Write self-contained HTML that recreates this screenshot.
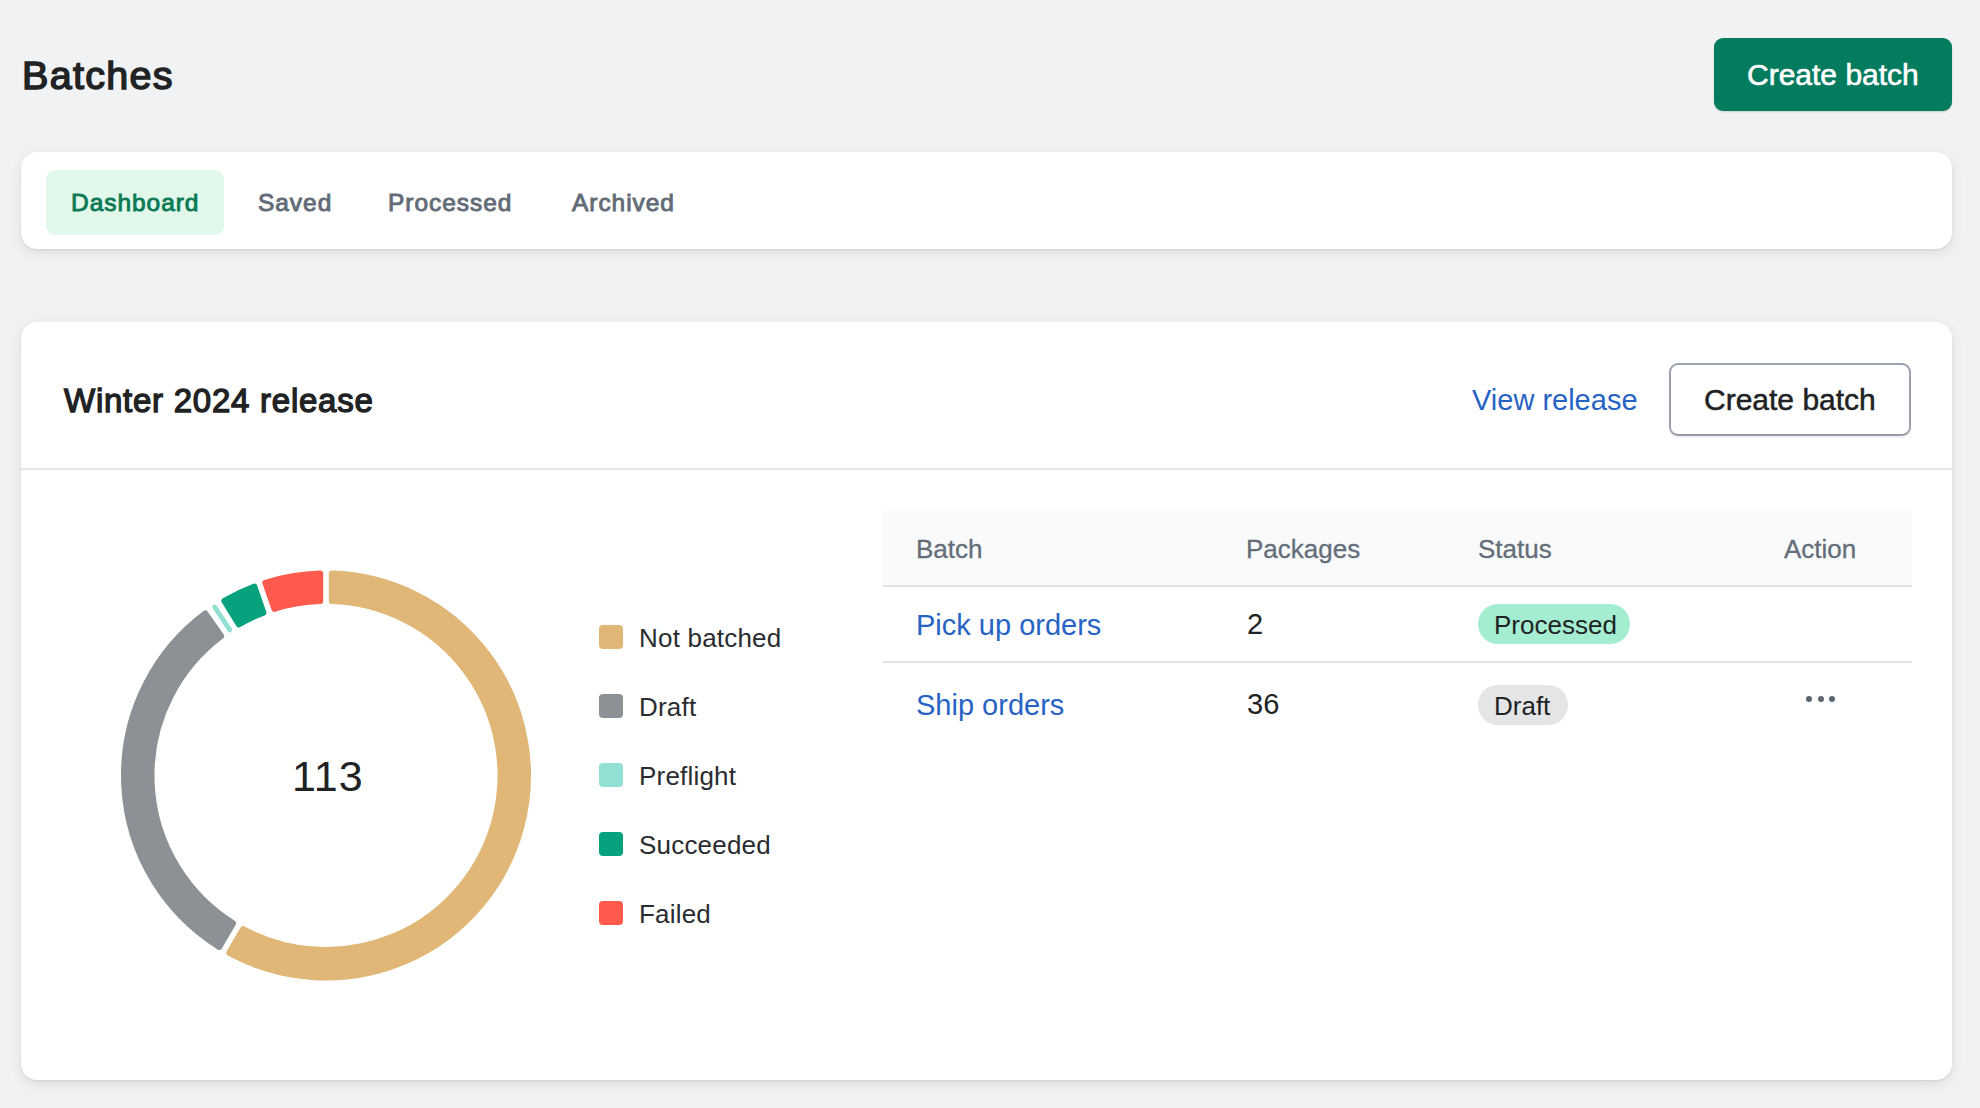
<!DOCTYPE html>
<html><head><meta charset="utf-8">
<style>
html,body{margin:0;padding:0;}
body{width:1980px;height:1108px;background:#F1F2F4;position:relative;overflow:hidden;font-family:"Liberation Sans",sans-serif;color:#202223;}
.abs{position:absolute;white-space:nowrap;line-height:1;}
.card{position:absolute;background:#fff;border-radius:16px;box-shadow:0 1px 2px rgba(0,0,0,0.08),0 4px 13px rgba(0,0,0,0.09);}
#title{left:22px;top:55.5px;font-size:39.5px;letter-spacing:1.3px;-webkit-text-stroke-width:1.5px;}
#pbtn{position:absolute;left:1714px;top:38px;width:238px;height:73px;background:#027B5E;border-radius:9px;box-shadow:0 1px 2px rgba(0,0,0,0.15);}
#pbtn span{left:33px;top:22px;font-size:30px;color:#fff;-webkit-text-stroke:0.6px #fff;}
#tabs{left:21px;top:152px;width:1931px;height:97px;}
.tabsel{position:absolute;left:25px;top:18px;width:178px;height:65px;background:#E1F8EB;border-radius:9px;}
.tab{top:38.5px;font-size:24.5px;letter-spacing:0.95px;-webkit-text-stroke-width:0.9px;color:#626B77;}
#main{left:21px;top:322px;width:1931px;height:758px;}
#hdrline{position:absolute;left:0;top:146px;width:1931px;height:2px;background:#E4E5E7;}
#wtitle{left:43px;top:61.5px;font-size:33px;letter-spacing:0.75px;-webkit-text-stroke-width:1.3px;}
#vrel{left:1451px;top:64px;font-size:29px;color:#2763C4;}
#obtn{position:absolute;left:1648px;top:41px;width:238px;height:69px;border:2px solid #9CA3AD;border-bottom-color:#949BA5;border-radius:9px;background:#fff;box-shadow:0 2px 1px rgba(0,0,0,0.06);}
#obtn span{left:33px;top:20px;font-size:30px;color:#202223;-webkit-text-stroke:0.5px #202223;}
#thead{position:absolute;left:862px;top:189px;width:1029px;height:74px;background:#F9FAFB;border-bottom:2px solid #E1E3E5;}
.th{top:25px;font-size:26px;color:#646D78;-webkit-text-stroke:0.3px #646D78;}
#row1line{position:absolute;left:862px;top:339px;width:1029px;height:2px;background:#E1E3E5;}
.td{font-size:29px;}
.link{color:#2763C4;}
.pill{position:absolute;height:40px;border-radius:20px;}
.pill span{left:16px;top:8px;font-size:26px;color:#202223;}
.dots{position:absolute;}
.dot{position:absolute;width:6.4px;height:6.4px;border-radius:50%;background:#5C6670;}
.sq{position:absolute;left:578px;width:24px;height:24px;border-radius:4px;}
.leg{left:618px;font-size:26px;color:#2A2C2F;letter-spacing:0.2px;}
#num{left:271px;top:433px;font-size:43px;letter-spacing:1px;}
</style></head><body>
<div class="abs" id="title">Batches</div>
<div id="pbtn"><span class="abs">Create batch</span></div>
<div class="card" id="tabs">
  <div class="tabsel"></div>
  <span class="abs tab" style="left:50px;color:#0B7A55">Dashboard</span>
  <span class="abs tab" style="left:237px">Saved</span>
  <span class="abs tab" style="left:367px">Processed</span>
  <span class="abs tab" style="left:551px">Archived</span>
</div>
<div class="card" id="main">
  <span class="abs" id="wtitle">Winter 2024 release</span>
  <span class="abs" id="vrel">View release</span>
  <div id="obtn"><span class="abs">Create batch</span></div>
  <div id="hdrline"></div>
  <svg width="1931" height="758" viewBox="21 322 1931 758" style="position:absolute;left:0;top:0">
<path d="M331.80,573.58A202.0,202.0 0 1 1 229.24,952.82L243.11,929.06A174.5,174.5 0 1 0 331.80,601.10Z" fill="#E0B777" stroke="#E0B777" stroke-width="6" stroke-linejoin="round"/>
<path d="M219.22,946.97A202.0,202.0 0 0 1 205.31,613.52L221.11,636.04A174.5,174.5 0 0 0 233.09,923.21Z" fill="#8C9196" stroke="#8C9196" stroke-width="6" stroke-linejoin="round"/>
<path d="M214.65,606.96L229.81,629.91" stroke="#92E0D4" stroke-width="4.8" stroke-linecap="round" fill="none"/>
<path d="M224.35,600.94A202.0,202.0 0 0 1 254.40,586.62L263.41,612.61A174.5,174.5 0 0 0 238.87,624.31Z" fill="#05A27D" stroke="#05A27D" stroke-width="6" stroke-linejoin="round"/>
<path d="M265.36,582.82A202.0,202.0 0 0 1 320.20,573.58L320.20,601.10A174.5,174.5 0 0 0 274.37,608.81Z" fill="#FF5A4B" stroke="#FF5A4B" stroke-width="6" stroke-linejoin="round"/>
  </svg>
  <span class="abs" id="num">113</span>
  <div class="sq" style="top:303px;background:#E0B777"></div><span class="abs leg" style="top:303px">Not batched</span>
  <div class="sq" style="top:372px;background:#8C9196"></div><span class="abs leg" style="top:372px">Draft</span>
  <div class="sq" style="top:441px;background:#92E0D4"></div><span class="abs leg" style="top:441px">Preflight</span>
  <div class="sq" style="top:510px;background:#05A27D"></div><span class="abs leg" style="top:510px">Succeeded</span>
  <div class="sq" style="top:579px;background:#FF5A4B"></div><span class="abs leg" style="top:579px">Failed</span>
  <div id="thead">
    <span class="abs th" style="left:33px">Batch</span>
    <span class="abs th" style="left:363px">Packages</span>
    <span class="abs th" style="left:595px">Status</span>
    <span class="abs th" style="left:901px">Action</span>
  </div>
  <div id="row1line"></div>
  <span class="abs td link" style="left:895px;top:289px">Pick up orders</span>
  <span class="abs td" style="left:1226px;top:288px">2</span>
  <div class="pill" style="left:1457px;top:282px;width:152px;background:#A4EDD0"><span class="abs">Processed</span></div>
  <span class="abs td link" style="left:895px;top:369px">Ship orders</span>
  <span class="abs td" style="left:1226px;top:368px">36</span>
  <div class="pill" style="left:1457px;top:363px;width:90px;background:#E4E5E7"><span class="abs">Draft</span></div>
  <div class="dot" style="left:1785px;top:374px"></div>
  <div class="dot" style="left:1796.5px;top:374px"></div>
  <div class="dot" style="left:1808px;top:374px"></div>
</div>
</body></html>
